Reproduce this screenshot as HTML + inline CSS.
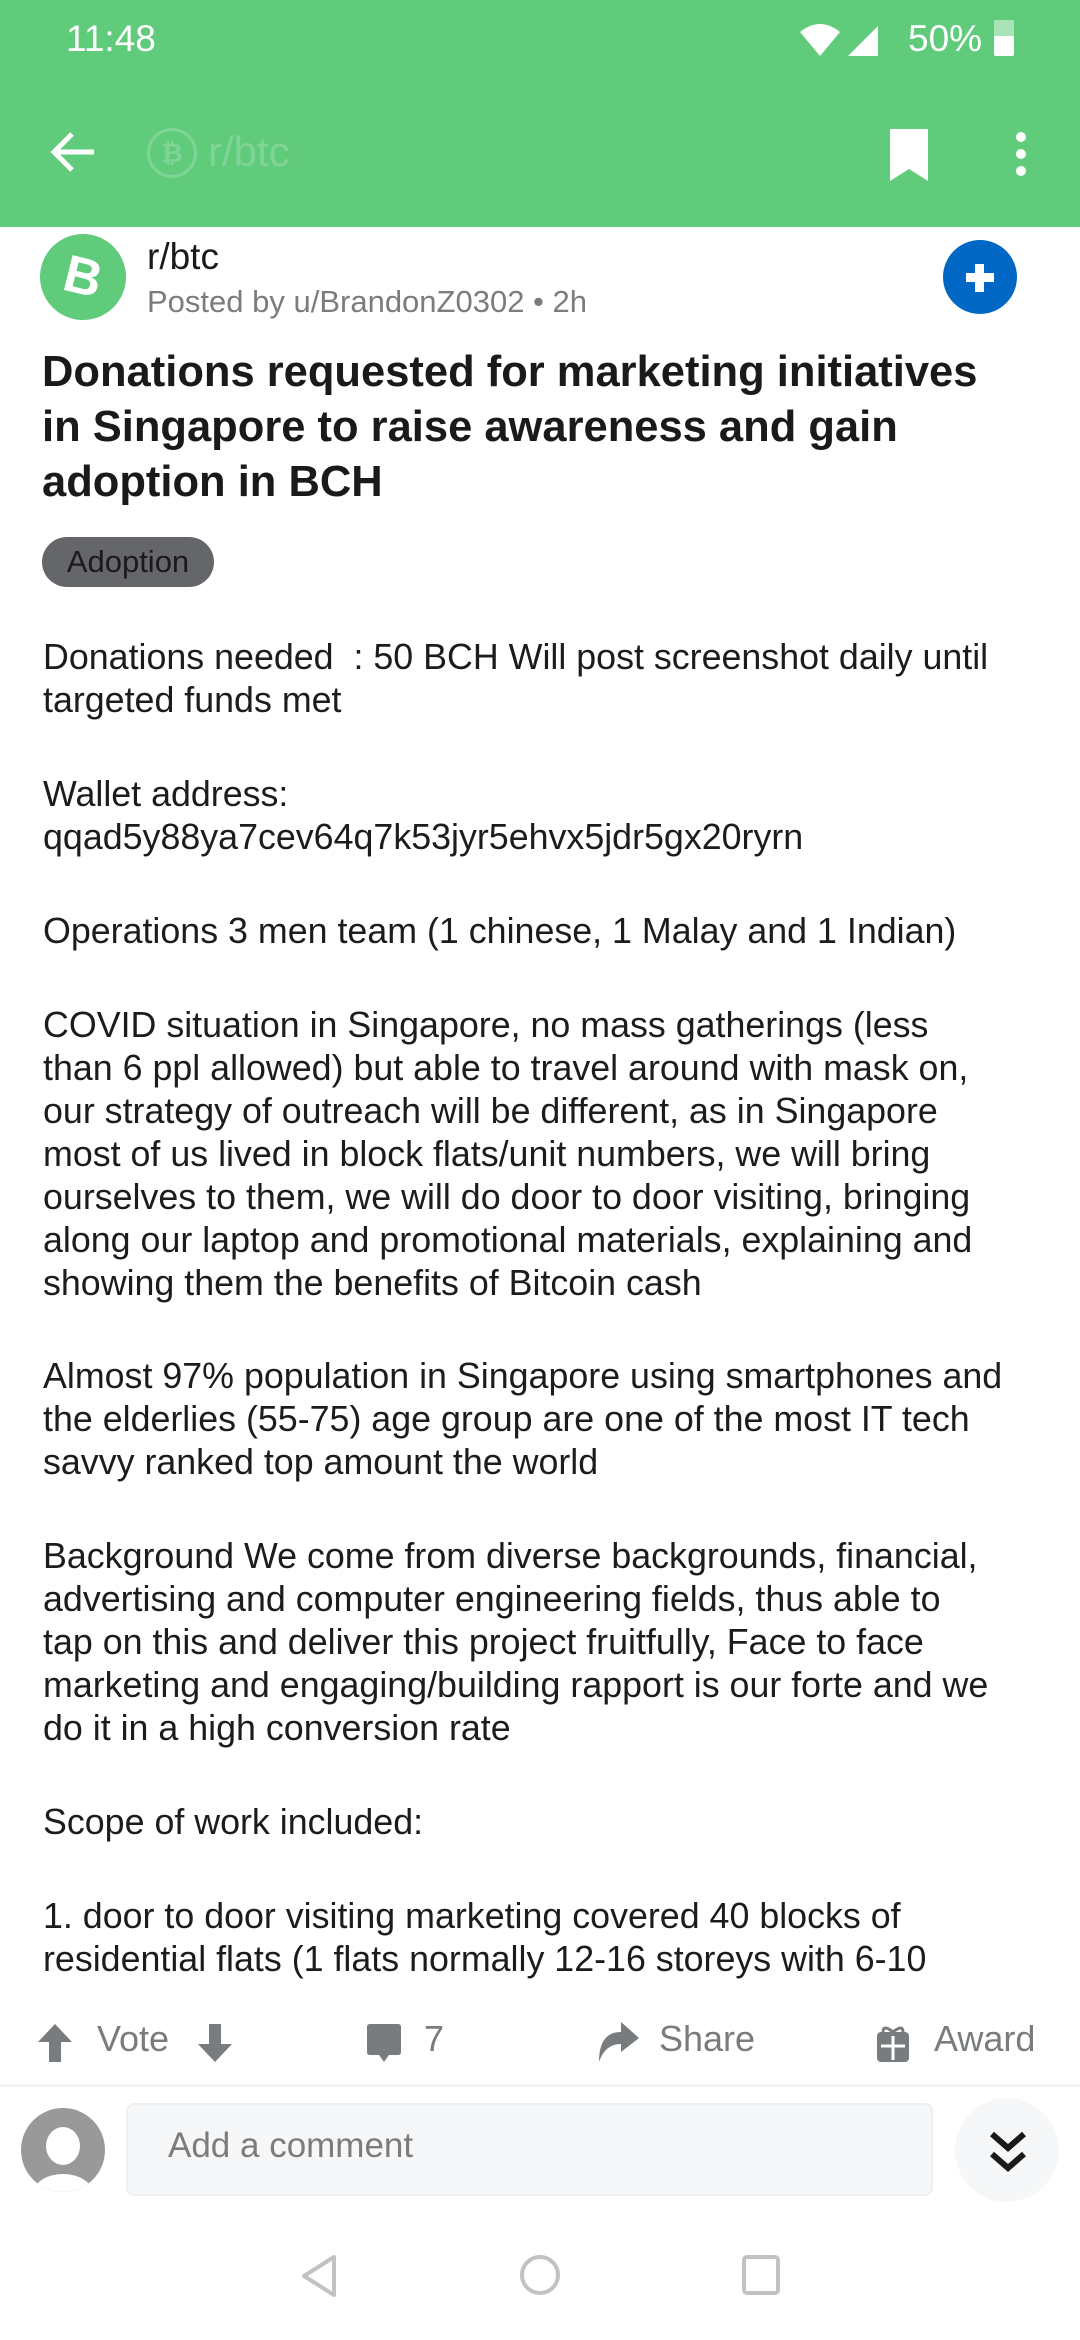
<!DOCTYPE html>
<html><head><meta charset="utf-8"><style>
*{margin:0;padding:0;box-sizing:border-box}
body{width:1080px;height:2340px;position:relative;background:#fff;font-family:"Liberation Sans",sans-serif;overflow:hidden;color:#1a1a1b}
.hdr{position:absolute;left:0;top:0;width:1080px;height:227px;background:#5fcb7b}
.a{position:absolute}
.p{position:absolute;left:43px;font-size:35.8px;line-height:43px;white-space:nowrap;color:#1c1c1c}
.t{position:absolute;left:42px;font-size:43.5px;font-weight:bold;line-height:55px;white-space:nowrap;color:#1a1a1b}
.act{position:absolute;top:2017px;font-size:36px;color:#787c7e;line-height:44px}
</style></head><body>
<div class="hdr"></div>
<div class="a" style="left:66px;top:18px;font-size:37px;color:#fff">11:48</div>
<svg class="a" style="left:798px;top:20px" width="80" height="40" viewBox="0 0 80 40"><path d="M2 12 Q22 -4 42 12 L22 36 Z" fill="#fff"/><path d="M52 36 L88 0 L88 36Z" fill="#fff" transform="translate(-2,0)"/></svg>
<div class="a" style="left:908px;top:18px;font-size:37px;color:#fff">50%</div>
<div class="a" style="left:994px;top:20px;width:20px;height:36px;background:#a8e4b8;border-radius:2px"></div>
<div class="a" style="left:994px;top:36px;width:20px;height:20px;background:#fff;border-radius:0 0 2px 2px"></div>
<svg class="a" style="left:48px;top:130px" width="50" height="44" viewBox="0 0 50 44"><path d="M46 22 H6 M24 4 L6 22 L24 40" stroke="#fff" stroke-width="5" fill="none"/></svg>
<div class="a" style="left:147px;top:128px;width:50px;height:50px;border:3px solid rgba(255,255,255,.2);border-radius:50%;color:rgba(255,255,255,.2);font-size:26px;text-align:center;line-height:44px;font-weight:bold">₿</div>
<div class="a" style="left:208px;top:128px;font-size:42px;color:rgba(255,255,255,.2)">r/btc</div>
<svg class="a" style="left:886px;top:127px" width="46" height="54" viewBox="0 0 46 54"><path d="M4 2 H42 V54 L23 42 L4 54Z" fill="#fff"/></svg>
<div class="a" style="left:1016px;top:132px;width:10px;height:10px;background:#fff;border-radius:50%"></div>
<div class="a" style="left:1016px;top:149px;width:10px;height:10px;background:#fff;border-radius:50%"></div>
<div class="a" style="left:1016px;top:166px;width:10px;height:10px;background:#fff;border-radius:50%"></div>
<div class="a" style="left:40px;top:234px;width:86px;height:86px;background:#5fcb7b;border-radius:50%;color:#fff;font-size:52px;font-weight:bold;text-align:center;line-height:86px;transform:rotate(14deg)">B</div>
<div class="a" style="left:147px;top:236px;font-size:37px;color:#1a1a1b">r/btc</div>
<div class="a" style="left:147px;top:284px;font-size:31px;color:#7c7c7c">Posted by u/BrandonZ0302 • 2h</div>
<div class="a" style="left:943px;top:240px;width:74px;height:74px;background:#0067c5;border-radius:50%"></div>
<div class="a" style="left:966px;top:273px;width:28px;height:9px;background:#fff"></div>
<div class="a" style="left:975px;top:264px;width:9px;height:28px;background:#fff"></div>
<div class="t" style="top:345px">Donations requested for marketing initiatives</div>
<div class="t" style="top:400px">in Singapore to raise awareness and gain</div>
<div class="t" style="top:455px">adoption in BCH</div>
<div class="a" style="left:42px;top:537px;width:172px;height:50px;background:#646669;border-radius:25px;color:#1a1a1b;font-size:31px;text-align:center;line-height:50px">Adoption</div>
<div class="p" style="top:636px">Donations needed&nbsp; : 50 BCH Will post screenshot daily until<br>targeted funds met</div>
<div class="p" style="top:773px">Wallet address:<br>qqad5y88ya7cev64q7k53jyr5ehvx5jdr5gx20ryrn</div>
<div class="p" style="top:910px">Operations 3 men team (1 chinese, 1 Malay and 1 Indian)</div>
<div class="p" style="top:1004px">COVID situation in Singapore, no mass gatherings (less<br>than 6 ppl allowed) but able to travel around with mask on,<br>our strategy of outreach will be different, as in Singapore<br>most of us lived in block flats/unit numbers, we will bring<br>ourselves to them, we will do door to door visiting, bringing<br>along our laptop and promotional materials, explaining and<br>showing them the benefits of Bitcoin cash</div>
<div class="p" style="top:1355px">Almost 97% population in Singapore using smartphones and<br>the elderlies (55-75) age group are one of the most IT tech<br>savvy ranked top amount the world</div>
<div class="p" style="top:1535px">Background We come from diverse backgrounds, financial,<br>advertising and computer engineering fields, thus able to<br>tap on this and deliver this project fruitfully, Face to face<br>marketing and engaging/building rapport is our forte and we<br>do it in a high conversion rate</div>
<div class="p" style="top:1801px">Scope of work included:</div>
<div class="p" style="top:1895px;height:84px;overflow:hidden">1. door to door visiting marketing covered 40 blocks of<br>residential flats (1 flats normally 12-16 storeys with 6-10</div>
<div class="a" style="left:0;top:1980px;width:1080px;height:104px;background:#fff"></div>
<svg class="a" style="left:38px;top:2024px" width="34" height="38" viewBox="0 0 34 38"><path d="M17 0 L34 18 H23 V38 H11 V18 H0Z" fill="#787c7e"/></svg>
<div class="act" style="left:97px">Vote</div>
<svg class="a" style="left:198px;top:2024px" width="34" height="38" viewBox="0 0 34 38"><path d="M17 38 L34 20 H23 V0 H11 V20 H0Z" fill="#787c7e"/></svg>
<svg class="a" style="left:367px;top:2024px" width="34" height="38" viewBox="0 0 34 38"><path d="M3 0 H31 Q34 0 34 3 V28 Q34 31 31 31 H22 L17 38 L12 31 H3 Q0 31 0 28 V3 Q0 0 3 0Z" fill="#787c7e"/></svg>
<div class="act" style="left:424px">7</div>
<svg class="a" style="left:597px;top:2022px" width="42" height="42" viewBox="0 0 42 42"><path d="M24 0 L42 16 L24 30 V22 Q8 22 2 40 Q2 10 24 10Z" fill="#787c7e"/></svg>
<div class="act" style="left:659px">Share</div>
<svg class="a" style="left:877px;top:2024px" width="32" height="38" viewBox="0 0 32 38"><rect x="0" y="8" width="32" height="30" rx="4" fill="#787c7e"/><path d="M6 8 Q6 0 16 8 Q26 0 26 8" stroke="#787c7e" stroke-width="3" fill="none"/><path d="M16 12 V36 M4 22 H28" stroke="#fff" stroke-width="3"/></svg>
<div class="act" style="left:934px">Award</div>
<div class="a" style="left:0;top:2084px;width:1080px;height:3px;background:#f2f2f2"></div>
<div class="a" style="left:21px;top:2108px;width:84px;height:84px;background:#999;border-radius:50%;overflow:hidden"><div style="position:absolute;left:25px;top:19px;width:34px;height:38px;background:#fff;border-radius:50%"></div><div style="position:absolute;left:12px;top:66px;width:60px;height:40px;background:#fff;border-radius:50%"></div></div>
<div class="a" style="left:126px;top:2103px;width:807px;height:93px;background:#f6f7f8;border:2px solid #edeff1;border-radius:8px"></div>
<div class="a" style="left:168px;top:2126px;font-size:35px;color:#7c7c7c">Add a comment</div>
<div class="a" style="left:955px;top:2098px;width:104px;height:104px;background:#f6f7f8;border-radius:50%"></div>
<svg class="a" style="left:988px;top:2130px" width="40" height="44" viewBox="0 0 40 44"><path d="M4 4 L20 18 L36 4 M4 24 L20 38 L36 24" stroke="#1a1a1b" stroke-width="6" fill="none"/></svg>
<svg class="a" style="left:298px;top:2254px" width="44" height="44" viewBox="0 0 44 44"><path d="M36 3 V41 L6 22Z" stroke="#c2c2c2" stroke-width="4" fill="none" stroke-linejoin="round"/></svg>
<div class="a" style="left:520px;top:2255px;width:40px;height:40px;border:4px solid #c2c2c2;border-radius:50%"></div>
<div class="a" style="left:742px;top:2255px;width:38px;height:40px;border:4px solid #c2c2c2;border-radius:5px"></div>
</body></html>
